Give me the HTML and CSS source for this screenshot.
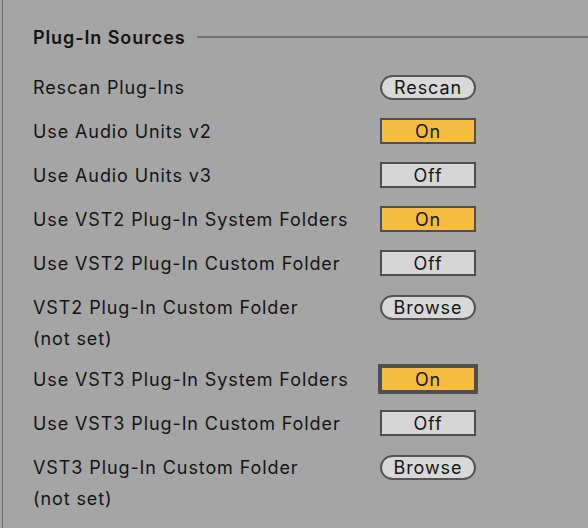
FILE: index.html
```html
<!DOCTYPE html>
<html lang="en">
<head>
  <meta charset="UTF-8" />
  <meta name="viewport" content="width=device-width, initial-scale=1" />
  <title>Plug-In Sources</title>
  <link rel="stylesheet" href="styles.css">
</head>
<body>
  <div class="panel">
    <div class="titulo">
      <h2>Plug-In Sources</h2>
      <span class="regla"></span>
    </div>

    <div class="fila">
      <span class="etiqueta">Rescan Plug-Ins</span>
      <button class="pastilla">Rescan</button>
    </div>
    <div class="fila">
      <span class="etiqueta">Use Audio Units v2</span>
      <button class="toggle on">On</button>
    </div>
    <div class="fila">
      <span class="etiqueta">Use Audio Units v3</span>
      <button class="toggle">Off</button>
    </div>
    <div class="fila">
      <span class="etiqueta">Use VST2 Plug-In System Folders</span>
      <button class="toggle on">On</button>
    </div>
    <div class="fila">
      <span class="etiqueta">Use VST2 Plug-In Custom Folder</span>
      <button class="toggle">Off</button>
    </div>
    <div class="fila">
      <span class="etiqueta">VST2 Plug-In Custom Folder</span>
      <button class="pastilla">Browse</button>
    </div>
    <div class="ruta">(not set)</div>
    <div class="fila">
      <span class="etiqueta">Use VST3 Plug-In System Folders</span>
      <button class="toggle on foco">On</button>
    </div>
    <div class="fila">
      <span class="etiqueta">Use VST3 Plug-In Custom Folder</span>
      <button class="toggle">Off</button>
    </div>
    <div class="fila">
      <span class="etiqueta">VST3 Plug-In Custom Folder</span>
      <button class="pastilla">Browse</button>
    </div>
    <div class="ruta">(not set)</div>
  </div>
</body>
</html>
```

FILE: styles.css
```css
body { margin: 0; background: #a5a5a5; font-family: 'Inter', 'Liberation Sans', sans-serif; color: #141414; overflow: hidden; letter-spacing: 0.9px; }
.panel { margin-left: 2px; border-left: 1px solid #6e6e6e; padding: 25px 0 0 30px; height: 528px; box-sizing: border-box; }
.titulo { display: flex; align-items: center; height: 24px; margin-bottom: 16px; }
.titulo h2 { margin: 0; font-size: 18px; font-weight: 600; white-space: nowrap; letter-spacing: 0.9px; }
.regla { flex: 1; height: 2px; background: #737373; margin-left: 12px; }
.fila { display: grid; grid-template-columns: 347px 96px; align-items: center; height: 44px; }
.etiqueta { font-size: 18px; white-space: nowrap; }
.ruta { font-size: 18px; line-height: 20px; margin-bottom: 8px; }
.fila button { font-family: inherit; font-size: 18px; letter-spacing: 0.9px; color: #141414; padding: 0; cursor: pointer; }
.pastilla { height: 25px; border: 2px solid #555; border-radius: 13px; background: #d8d8d8; }
.toggle { height: 26px; border: 2px solid #4f4f4f; background: #d6d6d6; }
.toggle.on { background: #f4bd42; }
.toggle.foco { border-width: 4px; height: 30px; width: 100px; margin-left: -2px; }
```
